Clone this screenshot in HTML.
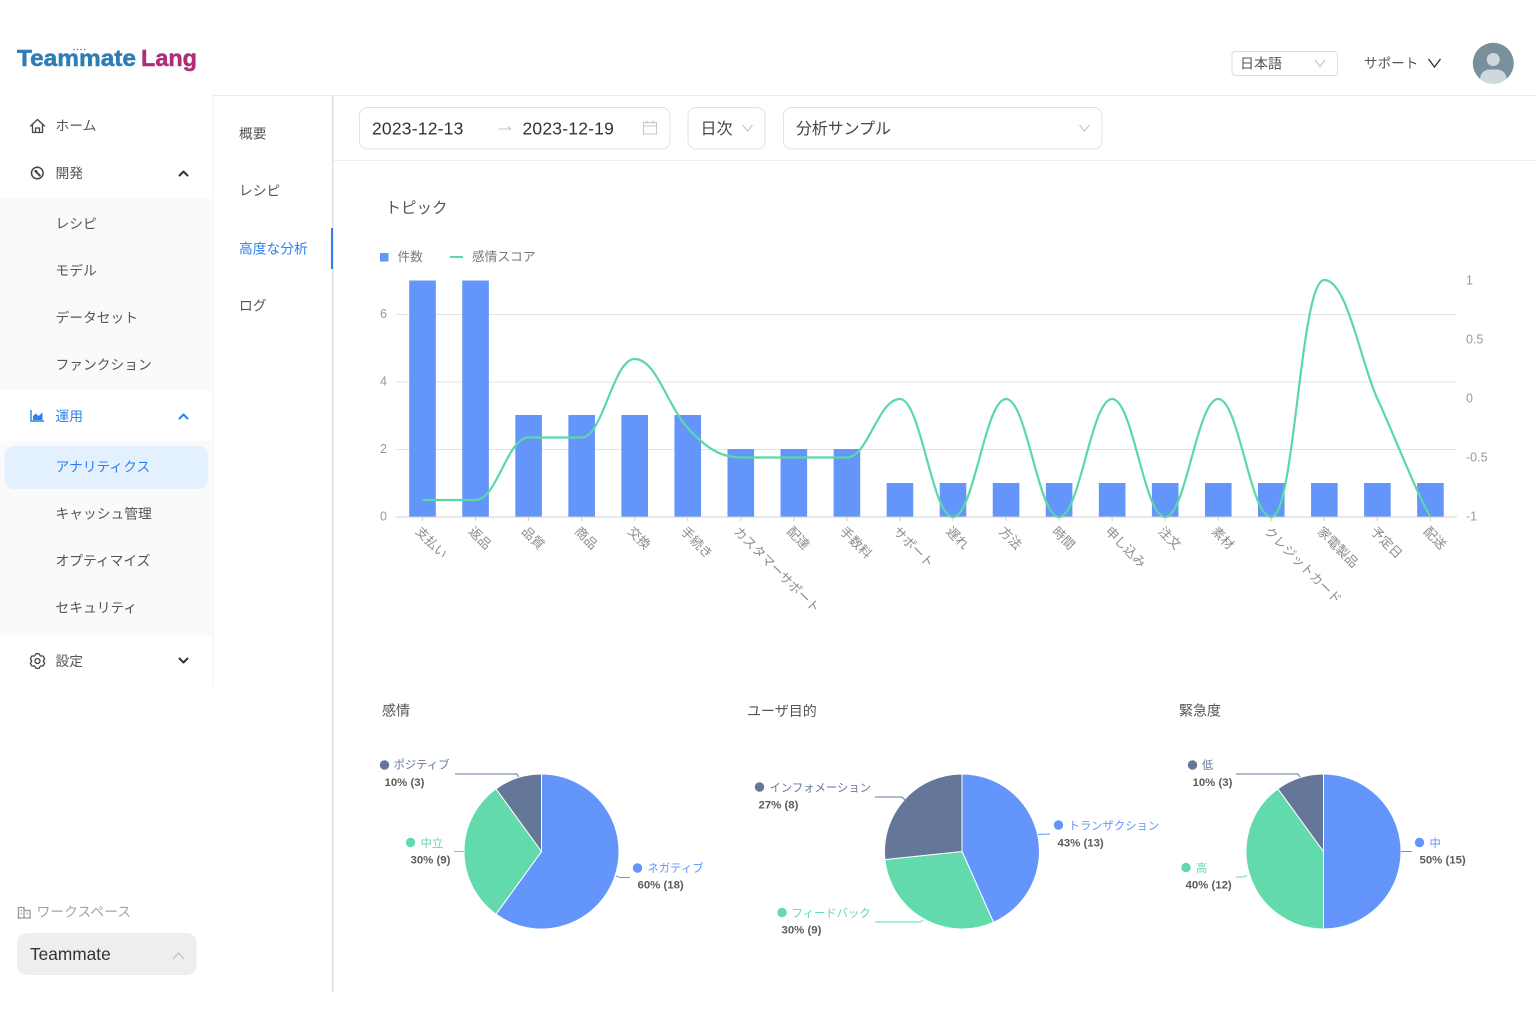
<!DOCTYPE html>
<html lang="ja"><head><meta charset="utf-8"><title>Teammate Lang</title>
<style>
html,body{margin:0;padding:0;background:#fff;width:1536px;height:1024px;overflow:hidden}
svg{display:block}
text{font-family:"Liberation Sans","Noto Sans CJK JP",sans-serif;dominant-baseline:central}
.n{font-size:13.75px;fill:#555}
.b{font-size:13.75px;fill:#2f80ed}
.ax{font-size:12.5px;fill:#999}
.c{font-size:12.8px;fill:#8c8c8c}
.p{font-size:11.4px;font-weight:700;fill:#5c5c5c}
.l{font-size:11.35px}
.t{font-size:14px;fill:#555}
.d{font-size:17.5px;fill:#333;letter-spacing:.2px}
</style></head><body>
<svg width="1536" height="1024" viewBox="0 0 1536 1024" xmlns="http://www.w3.org/2000/svg">
<rect width="1536" height="1024" fill="#fff"/>

<!-- logo -->
<text x="17" y="58" font-size="23" font-weight="700" fill="#2e7db5" stroke="#2e7db5" stroke-width=".5" textLength="119" lengthAdjust="spacingAndGlyphs">Teammate</text>
<text x="141" y="58" font-size="23" font-weight="700" fill="#ad2f78" stroke="#ad2f78" stroke-width=".5" textLength="56" lengthAdjust="spacingAndGlyphs">Lang</text>
<g fill="#2e7db5"><circle cx="74" cy="49.500" r=".8"/><circle cx="77.500" cy="49.500" r=".8"/><circle cx="81" cy="49.500" r=".8"/><circle cx="84.500" cy="49.500" r=".8"/></g>

<!-- structure lines -->
<rect x="213" y="95" width="1323" height="1" fill="#ebebeb"/>
<rect x="333" y="160" width="1203" height="1" fill="#efefef"/>
<rect x="212.500" y="96" width="1" height="590" fill="#f0f0f0"/>
<rect x="332" y="96" width="1.500" height="896" fill="#dedede"/>
<rect x="331" y="228" width="2" height="41" fill="#2f80ed"/>

<!-- sidebar backgrounds -->
<rect x="0" y="198" width="212" height="192" fill="#fafafa"/>
<rect x="0" y="441" width="212" height="195" fill="#fafafa"/>
<rect x="4.500" y="446" width="203.500" height="43" rx="10" fill="#e3f0fe"/>

<!-- sidebar text -->
<text class="n" x="55.500" y="126">ホーム</text>
<text class="n" x="55.500" y="173.500">開発</text>
<text class="n" x="55.500" y="224">レシピ</text>
<text class="n" x="55.500" y="271">モデル</text>
<text class="n" x="55.500" y="318">データセット</text>
<text class="n" x="55.500" y="365">ファンクション</text>
<text class="b" x="55.500" y="416.500">運用</text>
<text class="b" x="55.500" y="467">アナリティクス</text>
<text class="n" x="55.500" y="514">キャッシュ管理</text>
<text class="n" x="55.500" y="561">オプティマイズ</text>
<text class="n" x="55.500" y="608">セキュリティ</text>
<text class="n" x="55.500" y="661.500">設定</text>

<!-- sidebar icons -->
<g fill="none" stroke="#444" stroke-width="1.300" stroke-linejoin="round" stroke-linecap="round">
<path d="M30.500 126 L37.500 119.500 L44.500 126 M32.500 124.500 V132.500 H42.500 V124.500 M35.500 132.500 V128 H39.500 V132.500"/>
<circle cx="37.300" cy="173" r="5.800" stroke-width="1.500"/>
<path d="M36 171.700 L39.800 175.500" stroke-width="2"/>
<circle cx="35.800" cy="171.300" r="1.400" fill="#444" stroke="none"/>
<g transform="translate(37.500 661)"><path d="M1.560-7.340L-1.560-7.340L-2.900-5.020L-5.570-5.020L-7.130-2.320L-5.800 0L-7.130 2.320L-5.570 5.020L-2.900 5.020L-1.560 7.340L1.560 7.340L2.900 5.020L5.570 5.020L7.130 2.320L5.800 0L7.130-2.320L5.570-5.020L2.900-5.020Z"/><circle r="2.500"/></g>
</g>
<path d="M31 410 V421 H44" fill="none" stroke="#2f80ed" stroke-width="1.400"/>
<path d="M33 420 V416 L36 413.500 L38.500 416 L42.500 412.500 V420 Z" fill="#2f80ed"/>
<g fill="none" stroke="#333" stroke-width="2" stroke-linecap="round" stroke-linejoin="round">
<path d="M179.500 175.500 L183.500 171.500 L187.500 175.500"/>
<path d="M179.500 658.500 L183.500 662.500 L187.500 658.500"/>
</g>
<path d="M179.500 418.500 L183.500 414.500 L187.500 418.500" fill="none" stroke="#2f80ed" stroke-width="2" stroke-linecap="round" stroke-linejoin="round"/>

<!-- workspace -->
<g fill="none" stroke="#999" stroke-width="1.300"><path d="M18.500 918 V907.500 H24 V918 M24 910.500 H30 V918 M17.500 918 H31 M20.500 910.500 H22 M20.500 913.500 H22 M26.500 913.500 H28"/></g>
<text x="36.500" y="912" font-size="13.800" fill="#a3a3a3">ワークスペース</text>
<rect x="17" y="933" width="179.500" height="42" rx="10" fill="#eee"/>
<text x="30" y="954" font-size="17.300" fill="#333">Teammate</text>
<path d="M173 959 L178.500 953 L184 959" fill="none" stroke="#bdbdbd" stroke-width="1.200"/>

<!-- submenu -->
<text class="n" x="239" y="134">概要</text>
<text class="n" x="239" y="191">レシピ</text>
<text class="b" x="239" y="249">高度な分析</text>
<text class="n" x="239" y="306">ログ</text>

<!-- top right -->
<rect x="1232" y="51.500" width="105.500" height="24" rx="3" fill="#fff" stroke="#dcdcdc"/>
<text x="1240" y="63.500" font-size="14" fill="#555">日本語</text>
<path d="M1315 60 L1320 66.500 L1325 60" fill="none" stroke="#c4c4c4" stroke-width="1.100"/>
<text x="1364" y="63.500" font-size="13.600" fill="#555">サポート</text>
<path d="M1428.500 59 L1434.500 67 L1440.500 59" fill="none" stroke="#333" stroke-width="1.400"/>
<clipPath id="av"><circle cx="1493.300" cy="63.300" r="20.500"/></clipPath>
<circle cx="1493.300" cy="63.300" r="20.500" fill="#78909c"/>
<g clip-path="url(#av)" fill="#cfd8dc"><circle cx="1493.300" cy="59.500" r="6.500"/><rect x="1480" y="69.500" width="26.600" height="20" rx="9.500"/></g>

<!-- filters -->
<rect x="359.500" y="107.500" width="310.500" height="41.500" rx="8" fill="#fff" stroke="#e2e2e2"/>
<text class="d" x="372" y="128.500">2023-12-13</text>
<path d="M498.500 129 H511 M507.500 126.500 L511 129" fill="none" stroke="#c4c4c4" stroke-width="1"/>
<text class="d" x="522.500" y="128.500">2023-12-19</text>
<g fill="none" stroke="#c9c9c9" stroke-width="1.100"><rect x="643.500" y="122.500" width="13" height="11.500"/><path d="M643.500 126 H656.500 M647 120.500 V123.500 M653 120.500 V123.500"/></g>
<rect x="688" y="107.500" width="77" height="41.500" rx="8" fill="#fff" stroke="#e2e2e2"/>
<text x="700.500" y="129.500" font-size="16" fill="#444">日次</text>
<path d="M742.500 125 L747.500 131 L752.500 125" fill="none" stroke="#c4c4c4" stroke-width="1.100"/>
<rect x="783.500" y="107.500" width="318.500" height="41.500" rx="8" fill="#fff" stroke="#e2e2e2"/>
<text x="796" y="129.500" font-size="15.900" fill="#444">分析サンプル</text>
<path d="M1079.500 125 L1084.500 131 L1089.500 125" fill="none" stroke="#c4c4c4" stroke-width="1.100"/>

<!-- bar chart header -->
<text x="385.500" y="208.500" font-size="15.500" fill="#555">トピック</text>
<rect x="380" y="253" width="8.500" height="8.500" fill="#6395fa"/>
<text x="397.500" y="257" font-size="12.700" fill="#777">件数</text>
<rect x="450" y="256" width="13" height="2" fill="#5bd8a6"/>
<text x="472" y="257" font-size="12.700" fill="#777">感情スコア</text>

<!-- grid -->
<g fill="#e3e3e3"><rect x="396" y="314" width="1061" height="1"/><rect x="396" y="381.500" width="1061" height="1"/><rect x="396" y="449" width="1061" height="1"/></g>
<rect x="396" y="516.500" width="1061" height="1" fill="#cdd0d6"/>
<g class="ax">
<text class="ax" x="380" y="314">6</text><text class="ax" x="380" y="381.500">4</text><text class="ax" x="380" y="449">2</text><text class="ax" x="380" y="516.500">0</text>
<text class="ax" x="1466" y="280.500">1</text><text class="ax" x="1466" y="339.500">0.5</text><text class="ax" x="1466" y="398.500">0</text><text class="ax" x="1466" y="457.500">-0.5</text><text class="ax" x="1466" y="516.500">-1</text>
</g>

<!-- bars -->
<g fill="#6395fa">
<rect x="409.200" y="280.500" width="26.600" height="236"/>
<rect x="462.250" y="280.500" width="26.600" height="236"/>
<rect x="515.300" y="415" width="26.600" height="101.500"/>
<rect x="568.350" y="415" width="26.600" height="101.500"/>
<rect x="621.400" y="415" width="26.600" height="101.500"/>
<rect x="674.450" y="415" width="26.600" height="101.500"/>
<rect x="727.500" y="449" width="26.600" height="67.500"/>
<rect x="780.550" y="449" width="26.600" height="67.500"/>
<rect x="833.600" y="449" width="26.600" height="67.500"/>
<rect x="886.650" y="483" width="26.600" height="33.500"/>
<rect x="939.700" y="483" width="26.600" height="33.500"/>
<rect x="992.750" y="483" width="26.600" height="33.500"/>
<rect x="1045.800" y="483" width="26.600" height="33.500"/>
<rect x="1098.850" y="483" width="26.600" height="33.500"/>
<rect x="1151.900" y="483" width="26.600" height="33.500"/>
<rect x="1204.950" y="483" width="26.600" height="33.500"/>
<rect x="1258" y="483" width="26.600" height="33.500"/>
<rect x="1311.050" y="483" width="26.600" height="33.500"/>
<rect x="1364.100" y="483" width="26.600" height="33.500"/>
<rect x="1417.150" y="483" width="26.600" height="33.500"/>
</g>

<!-- ticks -->
<path stroke="#cdd0d6" stroke-width="1" fill="none" d="M422.500 517v4M475.550 517v4M528.600 517v4M581.650 517v4M634.700 517v4M687.750 517v4M740.800 517v4M793.850 517v4M846.900 517v4M899.950 517v4M953 517v4M1006.050 517v4M1059.100 517v4M1112.150 517v4M1165.200 517v4M1218.250 517v4M1271.300 517v4M1324.350 517v4M1377.400 517v4M1430.450 517v4"/>

<!-- sentiment line -->
<path fill="none" stroke="#5bd8a6" stroke-width="2.200" stroke-linejoin="round" d="M422.500 500 C440 500 458 500 475.550 500 C497 500 507 437.500 528.600 437.500 C546 437.500 564 437.500 581.650 437.500 C603 437.500 613 359 634.700 359 C656 359 667 405 687.750 428 C705 447 720 457.500 740.800 457.500 C758 457.500 776 457.500 793.850 457.500 C811 457.500 829 457.500 846.900 457.500 C868 457.500 878 399 899.950 399 C921 399 932 517 953 517 C974 517 985 399 1006.050 399 C1027 399 1038 517 1059.100 517 C1080 517 1091 399 1112.150 399 C1133 399 1144 517 1165.200 517 C1186 517 1197 399 1218.250 399 C1239 399 1250 517 1271.300 517 C1295 517 1300 280 1324.350 280 C1347 280 1360 360 1377.400 399 C1394 434 1414 488 1430.450 517"/>

<!-- category labels -->
<g class="c">
<text class="c" transform="translate(418 529) rotate(45)">支払い</text>
<text class="c" transform="translate(471.050 529) rotate(45)">返品</text>
<text class="c" transform="translate(524.100 529) rotate(45)">品質</text>
<text class="c" transform="translate(577.150 529) rotate(45)">商品</text>
<text class="c" transform="translate(630.200 529) rotate(45)">交換</text>
<text class="c" transform="translate(683.250 529) rotate(45)">手続き</text>
<text class="c" transform="translate(736.300 529) rotate(45)">カスタマーサポート</text>
<text class="c" transform="translate(789.350 529) rotate(45)">配達</text>
<text class="c" transform="translate(842.400 529) rotate(45)">手数料</text>
<text class="c" transform="translate(895.450 529) rotate(45)">サポート</text>
<text class="c" transform="translate(948.500 529) rotate(45)">遅れ</text>
<text class="c" transform="translate(1001.550 529) rotate(45)">方法</text>
<text class="c" transform="translate(1054.600 529) rotate(45)">時間</text>
<text class="c" transform="translate(1107.650 529) rotate(45)">申し込み</text>
<text class="c" transform="translate(1160.700 529) rotate(45)">注文</text>
<text class="c" transform="translate(1213.750 529) rotate(45)">素材</text>
<text class="c" transform="translate(1266.800 529) rotate(45)">クレジットカード</text>
<text class="c" transform="translate(1319.850 529) rotate(45)">家電製品</text>
<text class="c" transform="translate(1372.900 529) rotate(45)">予定日</text>
<text class="c" transform="translate(1425.950 529) rotate(45)">配送</text>
</g>

<!-- pie titles -->
<text class="t" x="382" y="710.500">感情</text>
<text class="t" x="747" y="711">ユーザ目的</text>
<text class="t" x="1179" y="710.500">緊急度</text>

<!-- pie 1 -->
<g stroke="#fff" stroke-width="1">
<path d="M541.500 851.500 V774 A77.500 77.500 0 1 1 495.950 914.200 Z" fill="#6395fa"/>
<path d="M541.500 851.500 L495.950 914.200 A77.500 77.500 0 0 1 495.950 788.800 Z" fill="#62daab"/>
<path d="M541.500 851.500 L495.950 788.800 A77.500 77.500 0 0 1 541.500 774 Z" fill="#657798"/>
</g>
<path d="M455 774 H517 L518.500 777" fill="none" stroke="#657798" stroke-width="1"/>
<path d="M454 851.500 H464" fill="none" stroke="#62daab" stroke-width="1"/>
<path d="M616 876 L620 877.500 H630" fill="none" stroke="#6395fa" stroke-width="1"/>
<circle cx="384.500" cy="765" r="4.700" fill="#657798"/><text class="l" x="393.500" y="765.500" fill="#657798">ポジティブ</text>
<text class="p" x="384.500" y="783">10% (3)</text>
<circle cx="410.500" cy="842.500" r="4.700" fill="#62daab"/><text class="l" x="420.500" y="844" fill="#62daab">中立</text>
<text class="p" x="410.500" y="860.500">30% (9)</text>
<circle cx="637.500" cy="868" r="4.700" fill="#6395fa"/><text class="l" x="647.500" y="869" fill="#6395fa">ネガティブ</text>
<text class="p" x="637.500" y="885.500">60% (18)</text>

<!-- pie 2 -->
<g stroke="#fff" stroke-width="1">
<path d="M962 851.500 V774 A77.500 77.500 0 0 1 993.500 922.300 Z" fill="#6395fa"/>
<path d="M962 851.500 L993.500 922.300 A77.500 77.500 0 0 1 884.900 859.600 Z" fill="#62daab"/>
<path d="M962 851.500 L884.900 859.600 A77.500 77.500 0 0 1 962 774 Z" fill="#657798"/>
</g>
<path d="M875 797 H902 L905 800" fill="none" stroke="#657798" stroke-width="1"/>
<path d="M1038 834.500 L1050 834" fill="none" stroke="#6395fa" stroke-width="1"/>
<path d="M875 922 H920 L923 920" fill="none" stroke="#62daab" stroke-width="1"/>
<circle cx="759.500" cy="787" r="4.700" fill="#657798"/><text class="l" x="769.500" y="788.500" fill="#657798">インフォメーション</text>
<text class="p" x="758.500" y="805.500">27% (8)</text>
<circle cx="1058.500" cy="825" r="4.700" fill="#6395fa"/><text class="l" x="1068.500" y="826.500" fill="#6395fa">トランザクション</text>
<text class="p" x="1057.500" y="843.500">43% (13)</text>
<circle cx="782" cy="912.500" r="4.700" fill="#62daab"/><text class="l" x="791.500" y="914" fill="#62daab">フィードバック</text>
<text class="p" x="781.500" y="930.500">30% (9)</text>

<!-- pie 3 -->
<g stroke="#fff" stroke-width="1">
<path d="M1323.500 851.500 V774 A77.500 77.500 0 0 1 1323.500 929 Z" fill="#6395fa"/>
<path d="M1323.500 851.500 V929 A77.500 77.500 0 0 1 1277.950 788.800 Z" fill="#62daab"/>
<path d="M1323.500 851.500 L1277.950 788.800 A77.500 77.500 0 0 1 1323.500 774 Z" fill="#657798"/>
</g>
<path d="M1236 774 H1298 L1300 777" fill="none" stroke="#657798" stroke-width="1"/>
<path d="M1236 877 L1243 877 L1247 875.500" fill="none" stroke="#62daab" stroke-width="1"/>
<path d="M1401 851.500 H1412" fill="none" stroke="#6395fa" stroke-width="1"/>
<circle cx="1192.500" cy="765" r="4.700" fill="#657798"/><text class="l" x="1202" y="766" fill="#657798">低</text>
<text class="p" x="1192.500" y="783">10% (3)</text>
<circle cx="1186" cy="867.500" r="4.700" fill="#62daab"/><text class="l" x="1196" y="869" fill="#62daab">高</text>
<text class="p" x="1185.500" y="885.500">40% (12)</text>
<circle cx="1419.500" cy="842.500" r="4.700" fill="#6395fa"/><text class="l" x="1429.500" y="844" fill="#6395fa">中</text>
<text class="p" x="1419.500" y="860.500">50% (15)</text>
</svg>
</body></html>
